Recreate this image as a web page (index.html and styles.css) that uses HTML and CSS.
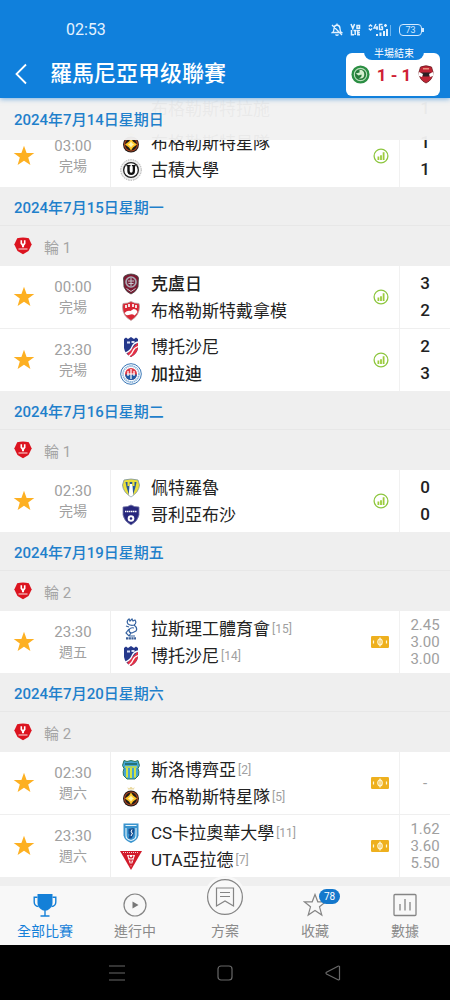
FILE: index.html
```html
<!DOCTYPE html>
<html lang="zh-Hant">
<head>
<meta charset="utf-8">
<meta name="viewport" content="width=device-width, initial-scale=1">
<title>羅馬尼亞甲级聯賽</title>
<link rel="stylesheet" href="styles.css">
</head>
<body>
<svg class="defs" aria-hidden="true">
  <symbol id="star" viewBox="0 0 22 22"><path fill="#fdb022" d="M11 .7l2.600 7.300h7.700l-6.100 4.600 2.200 7.500L11 15.700l-6.400 4.400 2.200-7.500L.7 8h7.700z"/></symbol>
  <symbol id="stats" viewBox="0 0 16 16"><circle cx="8" cy="8" r="6.900" fill="#fff" stroke="#8dc63f" stroke-width="1.300"/><path fill="#9ccc3c" d="M4.500 8.500h1.800V12H4.500zM7.100 7.300h1.800V12H7.100zM9.700 4.300h1.800V12H9.700z"/></symbol>
  <symbol id="field" viewBox="0 0 18 12"><rect width="18" height="12" rx="1.200" fill="#eeb01e"/><g fill="none" stroke="#fff8dc" stroke-width="1.200"><ellipse cx="9" cy="6" rx="2.200" ry="3"/><path d="M9 1.500v9M2.500 4.500v3M15.500 4.500v3"/></g></symbol>
  <symbol id="league" viewBox="0 0 18 18"><path fill="#dc1420" d="M3.200 1.300Q9-.2 14.800 1.300L17.700 7.500 14.500 14 9 17.300 3.500 14 .3 7.500z"/><path fill="#fff" d="M6.500 3.200h1.600v3.300h1.800V3.200h1.600v3.600L10 8.800v1.400H8V8.800L6.500 6.800z"/><path stroke="#fbd0d0" stroke-width="1.100" d="M4.500 12h9"/></symbol>
  <symbol id="fcsb" viewBox="0 0 22 22"><path fill="#ead9a0" d="M7.500 1l1.500 1.500L10.500 1h1L13 2.500 14.500 1 14 3.500H8z"/><circle cx="11" cy="12.500" r="8" fill="#211c18"/><circle cx="11" cy="12.500" r="6.500" fill="none" stroke="#a64020" stroke-width="1.200"/><path fill="#ffc629" d="M11 6.500l2 3 4 3-4 3-2 3-2-3-4-3 4-3z"/><path fill="#fff6b0" d="M11 9.500l1.200 1.800L14 12.500l-1.800 1.200L11 15.500l-1.200-1.800L8 12.500l1.800-1.200z"/></symbol>
  <symbol id="ucluj" viewBox="0 0 22 22"><circle cx="11" cy="11" r="10.300" fill="#eee" stroke="#999" stroke-width=".8" stroke-dasharray="1.500 1"/><circle cx="11" cy="11" r="8" fill="#222"/><circle cx="11" cy="11" r="6.700" fill="#fff"/><path fill="#111" d="M6.500 6h4v1.300h-.8V12q0 1.700 1.500 1.700T12.700 12V7.300h-.8V6h3.800v1.300H15V12q0 4-3.800 4t-3.900-4V7.300h-.8z"/></symbol>
  <symbol id="cfr" viewBox="0 0 22 22"><path fill="#7c1830" stroke="#444" stroke-width=".8" d="M4.500 3q6.500-4 13 0l1 2-.5 9q-2 5-7 7-5-2-7-7l-.5-9z"/><circle cx="11" cy="9" r="5.800" fill="#a9adb6"/><circle cx="11" cy="9" r="4.200" fill="#7c2840"/><path stroke="#c5c5cc" fill="none" d="M8 8h6M8.500 10.500h5M11 5v8M6.500 15.500l4.500 3 4.500-3"/></symbol>
  <symbol id="dinamo" viewBox="0 0 22 22"><path fill="#d92735" stroke="#b9a5a5" stroke-width=".8" d="M3 3.500q5 0 8-2 3 2 8 2l.5 3q0 9-8.500 14Q2.500 16 2.500 7z"/><path fill="#f3dfe0" d="M5 5h2v3H5zM8 4h2v3H8zM12 4h2v3h-2zM15 5h2v3h-2z"/><path fill="#fff" d="M4.500 13q3-3 6-2l3-2q3 0 4 3-2 3-3 3.500-2-2-4-1-3 1-4.500.5z"/></symbol>
  <symbol id="botosani" viewBox="0 0 22 22"><path fill="#25388b" d="M4 3l2-1.500 2 1.500 3-2 3 2 2-1.500L18 3v9q-1 6-7 9-6-3-7-9z"/><path fill="#e43145" d="M18 6v6q-1 6-7 9l-4-3z"/><path fill="none" stroke="#fff" stroke-width="1.300" d="M5.500 17q5-2 6.500-6t6-5M9 20q3-2 4-5t5-4.500"/><path fill="#d9e0f5" d="M7 5.500h3v2H7zM11.500 5h3v2h-3z"/></symbol>
  <symbol id="galati" viewBox="0 0 22 22"><circle cx="11" cy="11" r="10.300" fill="#fff" stroke="#3b78b7"/><circle cx="11" cy="11" r="8" fill="none" stroke="#8db6dc" stroke-width="1.800" stroke-dasharray="1.500 .6"/><circle cx="11" cy="11" r="6" fill="#e03945"/><path fill="#1f5ba5" d="M5 11.500h12q-1 5.500-6 5.500t-6-5.500z"/><path stroke="#fff" stroke-width="1.200" d="M8 8v5M11 6v10M14 8v5M7 11h8"/></symbol>
  <symbol id="petrolul" viewBox="0 0 22 22"><path fill="#eadf3b" stroke="#7892a6" stroke-width=".8" d="M4 3q7-2 14 0l1.500 5q-.5 7-8.500 12Q3 15 2.500 8z"/><path fill="#27589a" d="M5.500 5h11l-1 5-2.500 8-2 2-2-2-2.500-8z"/><path fill="#fff" d="M9.600 7h2.800l.8 11-2.200 2-2.200-2z"/><path fill="#eadf3b" d="M7.500 5h2.200v4H7.500zM12.300 5h2.200v4h-2.200z"/></symbol>
  <symbol id="voluntari" viewBox="0 0 22 22"><path fill="#27277d" stroke="#777aa8" stroke-width=".8" d="M3 3q5 0 8-2 3 2 8 2v8q-1 6-8 10-7-4-8-10z"/><path stroke="#fff" stroke-width="1.600" stroke-dasharray="1.500 .5" d="M5 7.500h12"/><circle cx="11" cy="14.500" r="3.300" fill="#fff"/><circle cx="11" cy="14.500" r="1.300" fill="#27277d"/></symbol>
  <symbol id="iasi" viewBox="0 0 22 22"><g fill="none" stroke="#3562a0" stroke-width="1.200"><path d="M8 6q-2-3 1-5l1 2 2-2 1 2 2-1q2 3-1 5M8 6q3 2 6 1 4 3 2 6l-4 2q-3 0-3-3 1-3 5-2M9 11l-3 4 3 3h6M11 15l-2 3M6 8l3 1"/></g><path d="M6 20.300h10" stroke="#3b5f98" stroke-width="2.200" stroke-dasharray="2.200 .5"/></symbol>
  <symbol id="slobozia" viewBox="0 0 22 22"><path fill="#43a5d4" stroke="#2f795d" d="M4 1.500l3 1 4-1 4 1 3-1 1.500 5L18 9.500q1.500 3 .5 7L15 20H7l-3.500-3.500q-1-4 .5-7L2.500 6.500z"/><path fill="#d2e343" d="M5 7.200h12v1.600H5zM6 9h2v9.500H6zM10 9h2v10h-2zM14 9h2v9.500h-2z"/><path fill="#24737a" d="M5 4h12v2H5z"/></symbol>
  <symbol id="craiova" viewBox="0 0 22 22"><path fill="#3a94ce" d="M3.500 1.500h15v12q-1 5-7.500 7.500-6.500-2.500-7.500-7.500z"/><path fill="none" stroke="#e7f4fb" stroke-width="1.100" d="M6 6v7.500q0 4 5 5 5-1 5-5V6M5.500 3.500h11"/><path fill="#174f91" d="M8.500 7l5-1 1 2-1 5-2 3.500H8.500l1-4-1-1z"/><path stroke="#fff" fill="none" d="M12 7.500l-1 2.500 1.500 1-1.500 3"/></symbol>
  <symbol id="uta" viewBox="0 0 22 22"><path fill="#d21a2a" d="M0 2h22L11 21z"/><path fill="#fff" d="M7 6h8l-4 12z"/><path stroke="#d21a2a" stroke-width="1.200" fill="none" d="M9.300 6.500V8q1.700 2 3.400 0V6.500M9 11h4M11 11v2.500M10 16.500l1-2 1 2"/><path stroke="#fff" stroke-width=".8" stroke-dasharray="1 1" d="M3 3.500h16"/></symbol>
</svg>

<div class="app">
  <header class="topbar">
    <div class="status">
      <span class="clock">02:53</span>
      <div class="status-icons">
        <svg width="12" height="14" viewBox="0 0 12 14" fill="none" stroke="#e4f2ff" stroke-width="1.300"><path d="M1.500 9.500q1.500-1 1.500-4 0-3 3-3.500 3 .5 3 3.500 0 3 1.500 4zM4.500 11.500q1.500 1.500 3 0M1 2l10 10M6 .5V2"/></svg>
        <svg width="11" height="13" viewBox="0 0 11 13" fill="none" stroke="#e4f2ff" stroke-width="1.500"><path d="M1 1l1.800 4.500L4.600 1M7 2.500h2.500v2.700H7zM1.500 7v4.800H4M3.500 7.600h3.200M5.200 7.600V12M10 7.600H7.800v4.200H10M7.800 9.700h2"/></svg>
        <svg width="24" height="14" viewBox="0 0 24 14" fill="none" stroke="#e4f2ff"><path stroke-width="1.400" d="M.8 3.500L2.500 2l1.700 1.500M.8 5.500L2.500 7l1.700-1.500M8 1L6 5h4M9 3v4M14.500 1.500h-3v5h3V4H13M16 2.500h3M17.500 1v3"/><path stroke-width="2" d="M9 13v-2M12.500 13v-3.500M16 13V8M19 13V6"/><path stroke="#6cb4ee" d="M22.500 13V2"/></svg>
        <span class="battery">73</span>
      </div>
    </div>
    <div class="titlebar">
      <button class="back" aria-label="返回"><svg width="14" height="22" viewBox="0 0 14 22"><path d="M12 1.500L2.500 11l9.500 9.500" fill="none" stroke="#fff" stroke-width="1.800"/></svg></button>
      <h1>羅馬尼亞甲级聯賽</h1>
      <a class="live" href="#live">
        <span class="live-state">半場結束</span>
        <svg width="19" height="19" viewBox="0 0 20 20"><circle cx="10" cy="10" r="9.500" fill="#2b8e43"/><circle cx="10" cy="10" r="6.500" fill="#277b3a" stroke="#bce0bd" stroke-width="1.200"/><path fill="#d5efcf" d="M9 5q5 0 5 5t-6 4q4-1 3-4l-3 1-3-2 4-1z"/></svg>
        <span class="live-score">1 - 1</span>
        <svg width="16" height="19" viewBox="0 0 16 19"><path fill="#c02434" stroke="#6a1a20" stroke-width=".8" d="M2.500 2Q8-.5 13.500 2L15 7q0 8-7 11-7-3-7-11z"/><path fill="#2c2024" d="M3 7.500h10l-2 4H5z"/><path fill="#fff" d="M1 7l4 2-1 3-3-1zM15 7l-4 2 1 3 3-1z"/><path fill="#e8907c" d="M5 3h6v1.500H5z"/></svg>
      </a>
    </div>
  </header>

  <main class="feed">
    <h2 class="date pinned">2024年7月14日星期日</h2>
    <ul class="matches scrolled">
      <li class="match tail">
        <div class="teams"><div class="team"><svg></svg>布格勒斯特拉施</div></div>
        <div class="score"><b>1</b></div>
      </li>
      <li class="match">
        <button class="fav" aria-label="收藏"><svg><use href="#star"/></svg></button>
        <div class="when"><time>03:00</time><span>完場</span></div>
        <div class="teams"><div class="team"><svg><use href="#fcsb"/></svg>布格勒斯特星隊</div><div class="team"><svg><use href="#ucluj"/></svg>古積大學</div></div>
        <svg class="mark"><use href="#stats"/></svg>
        <div class="score"><b>1</b><b>1</b></div>
      </li>
    </ul>

    <h2 class="date">2024年7月15日星期一</h2>
    <h3 class="round"><svg><use href="#league"/></svg>輪 1</h3>
    <ul class="matches">
      <li class="match">
        <button class="fav" aria-label="收藏"><svg><use href="#star"/></svg></button>
        <div class="when"><time>00:00</time><span>完場</span></div>
        <div class="teams"><div class="team winner"><svg><use href="#cfr"/></svg>克盧日</div><div class="team"><svg><use href="#dinamo"/></svg>布格勒斯特戴拿模</div></div>
        <svg class="mark"><use href="#stats"/></svg>
        <div class="score"><b>3</b><b>2</b></div>
      </li>
      <li class="match">
        <button class="fav" aria-label="收藏"><svg><use href="#star"/></svg></button>
        <div class="when"><time>23:30</time><span>完場</span></div>
        <div class="teams"><div class="team"><svg><use href="#botosani"/></svg>博托沙尼</div><div class="team winner"><svg><use href="#galati"/></svg>加拉迪</div></div>
        <svg class="mark"><use href="#stats"/></svg>
        <div class="score"><b>2</b><b>3</b></div>
      </li>
    </ul>

    <h2 class="date">2024年7月16日星期二</h2>
    <h3 class="round"><svg><use href="#league"/></svg>輪 1</h3>
    <ul class="matches">
      <li class="match">
        <button class="fav" aria-label="收藏"><svg><use href="#star"/></svg></button>
        <div class="when"><time>02:30</time><span>完場</span></div>
        <div class="teams"><div class="team"><svg><use href="#petrolul"/></svg>佩特羅魯</div><div class="team"><svg><use href="#voluntari"/></svg>哥利亞布沙</div></div>
        <svg class="mark"><use href="#stats"/></svg>
        <div class="score"><b>0</b><b>0</b></div>
      </li>
    </ul>

    <h2 class="date">2024年7月19日星期五</h2>
    <h3 class="round"><svg><use href="#league"/></svg>輪 2</h3>
    <ul class="matches">
      <li class="match">
        <button class="fav" aria-label="收藏"><svg><use href="#star"/></svg></button>
        <div class="when"><time>23:30</time><span>週五</span></div>
        <div class="teams"><div class="team"><svg><use href="#iasi"/></svg>拉斯理工體育會<small>[15]</small></div><div class="team"><svg><use href="#botosani"/></svg>博托沙尼<small>[14]</small></div></div>
        <svg class="mark field"><use href="#field"/></svg>
        <div class="odds"><span>2.45</span><span>3.00</span><span>3.00</span></div>
      </li>
    </ul>

    <h2 class="date">2024年7月20日星期六</h2>
    <h3 class="round"><svg><use href="#league"/></svg>輪 2</h3>
    <ul class="matches">
      <li class="match">
        <button class="fav" aria-label="收藏"><svg><use href="#star"/></svg></button>
        <div class="when"><time>02:30</time><span>週六</span></div>
        <div class="teams"><div class="team"><svg><use href="#slobozia"/></svg>斯洛博齊亞<small>[2]</small></div><div class="team"><svg><use href="#fcsb"/></svg>布格勒斯特星隊<small>[5]</small></div></div>
        <svg class="mark field"><use href="#field"/></svg>
        <div class="odds"><span>-</span></div>
      </li>
      <li class="match">
        <button class="fav" aria-label="收藏"><svg><use href="#star"/></svg></button>
        <div class="when"><time>23:30</time><span>週六</span></div>
        <div class="teams"><div class="team"><svg><use href="#craiova"/></svg>CS卡拉奧華大學<small>[11]</small></div><div class="team"><svg><use href="#uta"/></svg>UTA亞拉德<small>[7]</small></div></div>
        <svg class="mark field"><use href="#field"/></svg>
        <div class="odds"><span>1.62</span><span>3.60</span><span>5.50</span></div>
      </li>
    </ul>
  </main>

  <nav class="tabs">
    <a class="tab active" href="#all"><svg width="24" height="24" viewBox="0 0 24 24"><path fill="#1480d8" d="M4.500 1h15v9q0 5-5.500 7.500h-4Q4.500 15 4.500 10z"/><path fill="none" stroke="#1480d8" stroke-width="1.400" d="M4.500 4.200H1.200V9q0 4 4.300 4.500M19.500 4.200h3.300V9q0 4-4.300 4.500M12 17v5.500M7.500 23h9"/></svg>全部比賽</a>
    <a class="tab" href="#playing"><svg width="24" height="24" viewBox="0 0 24 24"><circle cx="12" cy="12" r="11" fill="none" stroke="#858585" stroke-width="1.200"/><path fill="#777" d="M9.500 8.500l6 3.500-6 3.500z"/></svg>進行中</a>
    <a class="tab center" href="#plan"><span class="bump"><svg width="38" height="38" viewBox="0 0 38 38" fill="none" stroke="#858585" stroke-width="1.200"><circle cx="19" cy="19" r="17.400"/><path d="M10.500 10h17v18l-8.500-5-8.500 5zM14 14.500h10M14 18.500h10"/></svg></span>方案</a>
    <a class="tab" href="#favorites"><span class="icon-box"><svg width="24" height="24" viewBox="0 0 24 24"><path fill="none" stroke="#858585" stroke-width="1.200" d="M12 1.500l2.800 7.300h8l-6.300 5 2.300 8.200L12 17.500 5.200 22l2.300-8.200-6.300-5h8z"/></svg><span class="count">78</span></span>收藏</a>
    <a class="tab" href="#data"><svg width="24" height="24" viewBox="0 0 24 24" fill="none" stroke="#858585" stroke-width="1.300"><rect x="1" y="1.500" width="22" height="21" rx="1"/><path d="M7 11v6.500M12 6v11.500M17 9v8.500"/></svg>數據</a>
  </nav>

  <footer class="sysnav">
    <button aria-label="最近"><svg width="18" height="18" viewBox="0 0 18 18"><path d="M1 2h16M1 9h16M1 16h16"/></svg></button>
    <button aria-label="主畫面"><svg width="18" height="18" viewBox="0 0 18 18"><rect x="2" y="2" width="14" height="14" rx="3"/></svg></button>
    <button aria-label="返回上一頁"><svg width="18" height="18" viewBox="0 0 18 18"><path d="M15.500 2.500v13q-.5.800-1.500.3L2.500 10q-1-1 0-1.800L14 2.200q1-.5 1.500.3z"/></svg></button>
  </footer>
</div>
</body>
</html>
```

FILE: styles.css
```css
* { box-sizing: border-box; }

body {
  margin: 0;
  font-family: Roboto, "Noto Sans CJK TC", sans-serif;
  color: #222;
  background: #efefef;
}

h1, h2, h3, ul { margin: 0; padding: 0; list-style: none; }
button { margin: 0; padding: 0; border: 0; background: none; }
a { color: inherit; text-decoration: none; }
svg { display: block; flex: none; }
.defs { position: absolute; width: 0; height: 0; }

.app {
  display: flex;
  flex-direction: column;
  height: 100vh;
}

/* Header */
.topbar {
  z-index: 3;
  background: #1080dc;
  color: #fff;
  box-shadow: 0 1px 5px rgba(40, 130, 210, .6);
}
.status {
  display: flex;
  align-items: center;
  justify-content: space-between;
  padding: 20px 28px 11px 66px;
}
.clock { font-size: 16px; line-height: 19px; color: #e4f2ff; }
.status-icons { display: flex; align-items: center; gap: 7px; }
.battery {
  position: relative;
  width: 23px;
  height: 12px;
  border: 1px solid #d4eaff;
  border-radius: 4px;
  font-size: 9px;
  line-height: 10px;
  text-align: center;
  color: #d4eaff;
}
.battery::after {
  content: "";
  position: absolute;
  top: 3px;
  right: -3px;
  width: 2px;
  height: 4px;
  background: #d4eaff;
}
.titlebar {
  display: flex;
  align-items: center;
  height: 48px;
  padding: 0 10px 0 14px;
}
.back { width: 36px; }
.titlebar h1 { flex: 1; font-size: 22px; line-height: 30px; font-weight: 500; }
.live {
  position: relative;
  display: flex;
  align-items: center;
  justify-content: space-between;
  width: 94px;
  height: 43px;
  padding: 1px 6px 0 5px;
  border-radius: 6px;
  background: #fff;
}
.live-state {
  position: absolute;
  top: -6px;
  left: 18px;
  width: 60px;
  border-radius: 0 0 8px 8px;
  background: #1080dc;
  font-size: 10px;
  line-height: 13px;
  text-align: center;
}
.live-score { font-size: 17px; font-weight: 700; line-height: 20px; color: #cf2035; }

/* Fixture list */
.feed { flex: 1; min-height: 0; overflow: hidden; }
.date {
  height: 39px;
  padding-left: 14px;
  border-bottom: 1px solid #e7e7e7;
  background: #efefef;
  font-size: 15px;
  font-weight: 500;
  line-height: 42px;
  color: #1f80cb;
}
.date.pinned {
  position: sticky;
  top: 0;
  z-index: 2;
  height: 42px;
  border: 0;
  line-height: 44px;
  background: rgba(241, 241, 241, .96);
}
.round {
  display: flex;
  align-items: center;
  gap: 12px;
  height: 40px;
  padding-left: 14px;
  font-size: 15px;
  font-weight: 400;
  color: #a5a5a5;
}
.round svg { width: 18px; height: 18px; }
.matches { background: #fff; }
.matches.scrolled { margin-top: -47px; }
.match {
  display: grid;
  grid-template-columns: 48px 50px 1fr 37px 51px;
  align-items: center;
  height: 62px;
}
.match + .match { height: 63px; border-top: 1px solid #efefef; }
.match.tail { height: 31px; }
.tail .teams { grid-column: 3; }
.tail .score { grid-column: 5; }
.fav svg { width: 22px; height: 22px; margin: 0 auto; }
.when {
  display: flex;
  flex-direction: column;
  align-items: center;
  font-size: 15px;
  line-height: 20px;
  color: #a0a0a0;
}
.when span { font-size: 14px; }
.teams {
  align-self: stretch;
  display: flex;
  flex-direction: column;
  justify-content: center;
  margin-left: 12px;
  border-left: 1px solid #efefef;
  padding: 1px 0 0 9px;
}
.team {
  display: flex;
  align-items: center;
  height: 27px;
  font-size: 17px;
  line-height: 27px;
  white-space: nowrap;
}
.team svg { width: 22px; height: 22px; margin-right: 9px; }
.winner { font-weight: 500; }
.team small { margin-left: 2px; font-size: 12px; color: #a0a0a0; }
.mark { width: 16px; height: 16px; margin-left: 11px; }
.mark.field { width: 18px; height: 12px; margin-left: 9px; }
.score, .odds {
  align-self: stretch;
  display: flex;
  flex-direction: column;
  justify-content: center;
  align-items: center;
  border-left: 1px solid #f1f1f1;
}
.score b { font-size: 17px; font-weight: 500; line-height: 27px; }
.odds { font-size: 15px; line-height: 17px; color: #a0a0a0; }

/* Tab bar */
.tabs {
  z-index: 2;
  display: grid;
  grid-template-columns: repeat(5, 1fr);
  background: #f8f8f8;
}
.tab {
  position: relative;
  display: flex;
  flex-direction: column;
  align-items: center;
  gap: 4px;
  padding: 7px 0 4px;
  font-size: 14px;
  line-height: 20px;
  color: #8a8a8a;
}
.tab.active { color: #1480d8; }
.tab.center { justify-content: flex-end; }
.bump {
  position: absolute;
  top: -10px;
  padding: 2px;
  border-radius: 50%;
  background: #f8f8f8;
}
.icon-box { position: relative; }
.count {
  position: absolute;
  top: -4px;
  left: 16px;
  width: 21px;
  border-radius: 8px;
  background: #1478cc;
  font-size: 10px;
  line-height: 15px;
  text-align: center;
  color: #fff;
}

/* System navigation */
.sysnav {
  display: flex;
  justify-content: center;
  align-items: center;
  gap: 20%;
  height: 55px;
  background: #000;
}
.sysnav svg { fill: none; stroke: #686868; stroke-width: 1.2; }
```
